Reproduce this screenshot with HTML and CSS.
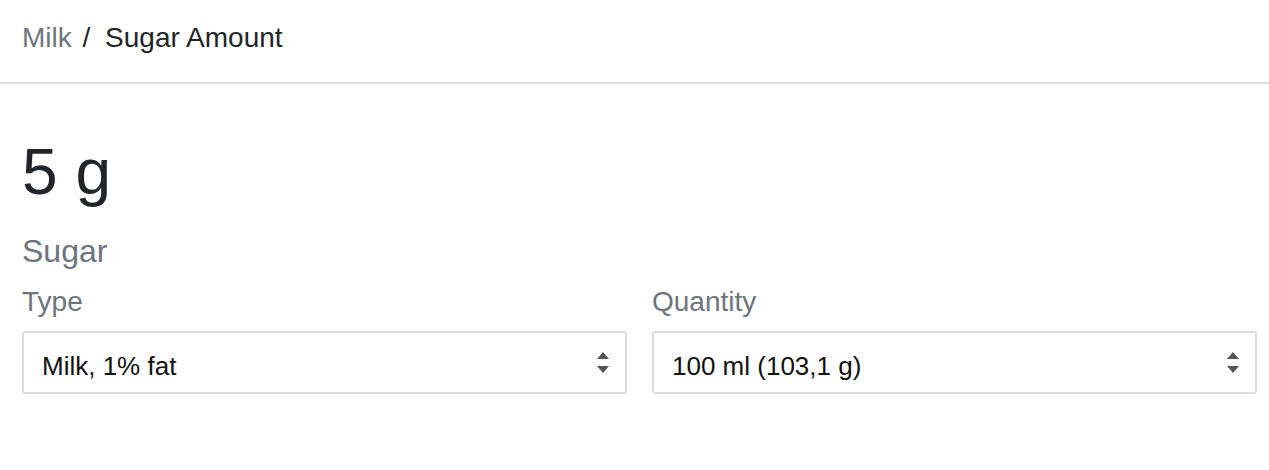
FILE: index.html
```html
<!DOCTYPE html>
<html lang="en">
<head>
    <meta charset="UTF-8">
    <title>Sugar Amount</title>
    <link rel="stylesheet" href="styles.css">
</head>
<body>
    <!-- Breadcrumb -->
    <div class="header">
        <nav class="breadcrumb">
            <a href="#" class="crumb-link">Milk</a>
            <span class="crumb-sep">/</span>
            <span class="crumb-current">Sugar Amount</span>
        </nav>
    </div>

    <div class="content">
        <div class="amount">5 g</div>
        <div class="nutrient">Sugar</div>

        <div class="fields">
            <div class="field">
                <label class="field-label">Type</label>
                <div class="select-box">
                    <span class="select-value">Milk, 1% fat</span>
                    <svg class="select-arrows" width="12" height="22" viewBox="0 0 12 22">
                        <polygon points="6,0 12,7 0,7" fill="#555"/>
                        <polygon points="0,14 12,14 6,21" fill="#555"/>
                    </svg>
                </div>
            </div>
            <div class="field">
                <label class="field-label">Quantity</label>
                <div class="select-box">
                    <span class="select-value">100 ml (103,1 g)</span>
                    <svg class="select-arrows" width="12" height="22" viewBox="0 0 12 22">
                        <polygon points="6,0 12,7 0,7" fill="#555"/>
                        <polygon points="0,14 12,14 6,21" fill="#555"/>
                    </svg>
                </div>
            </div>
        </div>
    </div>
</body>
</html>
```

FILE: styles.css
```css
/* General Styles */
body {
    font-family: "Liberation Sans", Arial, sans-serif;
    background-color: #ffffff;
    color: #212529;
    margin: 0;
    padding: 0;
}

/* Header / Breadcrumb */
.header {
    padding: 17px 12px 23px 22px;
    border-bottom: 2px solid #dddddd;
}

.breadcrumb {
    font-size: 28px;
    line-height: 42px;
}

.crumb-link {
    color: #6c757d;
    text-decoration: none;
}

.crumb-sep {
    color: #212529;
    margin: 0 7px 0 3px;
}

.crumb-current {
    color: #212529;
}

/* Main Content */
.content {
    padding: 50px 12px 0 22px;
}

.amount {
    font-size: 64px;
    line-height: 1.2;
    color: #212529;
}

.nutrient {
    margin-top: 21px;
    font-size: 32px;
    line-height: 1.2;
    color: #6c757d;
}

.fields {
    display: grid;
    grid-template-columns: 1fr 1fr;
    gap: 25px;
    margin-top: 15px;
}

.field-label {
    display: block;
    font-size: 28px;
    line-height: 1.2;
    color: #6c757d;
    margin-bottom: 12px;
}

.select-box {
    display: flex;
    align-items: center;
    justify-content: space-between;
    height: 59px;
    padding: 0 16px 0 18px;
    border: 2px solid #dcdcdc;
    border-radius: 3px;
}

.select-value {
    padding-top: 8px;
    font-size: 26px;
    color: #111111;
}

.select-arrows {
    display: block;
    margin-top: 2px;
}
```
